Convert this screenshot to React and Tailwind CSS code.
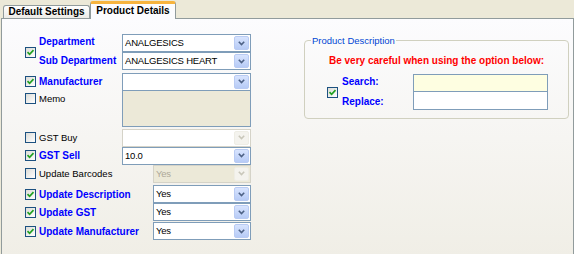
import React from 'react'

// XP-style checkbox, 11px
function Check({ checked = false, className = '' }) {
  return (
    <div className={`flex h-[11px] w-[11px] shrink-0 items-center justify-center border border-[#1C5180] bg-gradient-to-br from-[#DCDCD7] to-white ${className}`}>
      {checked && (
        <svg width="9" height="9" viewBox="0 0 9 9">
          <path d="M1.5 4.2 L3.6 6.3 L7.5 2.2" fill="none" stroke="#21A121" strokeWidth="1.7" />
        </svg>
      )}
    </div>
  )
}

function DropButton({ disabled }) {
  return (
    <div className={`m-[1px] flex w-[15px] shrink-0 items-center justify-center rounded-[2px] border ${disabled ? 'border-[#EEEDE5] bg-[#F4F3EE]' : 'border-[#B9CBF3] bg-gradient-to-b from-[#D8E4FE] to-[#B7CBF6]'}`}>
      <svg width="7" height="5" viewBox="0 0 7 5">
        <path d="M0.8 0.8 L3.5 3.5 L6.2 0.8" fill="none" stroke={disabled ? '#C9C7BA' : '#4D6185'} strokeWidth="1.6" />
      </svg>
    </div>
  )
}

function Combo({ value = '', disabled = false, shaded = false, className = '' }) {
  return (
    <div className={`flex h-[18px] shrink-0 items-stretch border ${disabled ? 'border-[#D5D3C8]' : 'border-[#7F9DB9]'} ${shaded ? 'bg-[#ECE9D8]' : 'bg-white'} ${className}`}>
      <span className={`flex-1 truncate pl-[2px] text-[9.5px] leading-[16px] tracking-[-0.2px] ${disabled ? 'text-[#ACA899]' : 'text-black'}`}>{value}</span>
      <DropButton disabled={disabled} />
    </div>
  )
}

function Row({ label, bold, checked, children, short, className = '' }) {
  return (
    <div className={`flex items-center ${className}`}>
      <Check checked={checked} />
      <span className={`ml-[3px] shrink-0 whitespace-nowrap leading-[13px] ${short ? 'w-[114px]' : 'w-[83px]'} ${bold ? 'text-[10px] font-bold text-[#0000FF]' : 'text-[9.5px] text-black'}`}>
        {label}
      </span>
      {children}
    </div>
  )
}

export default function App() {
  return (
    <div className="h-[254px] w-[574px] overflow-hidden bg-[#ECE9D8] font-['Liberation_Sans',Arial,sans-serif] text-[10px] text-black">
      {/* tabs */}
      <div className="flex h-[18px] items-end">
        <div className="ml-[3px] flex h-[13px] w-[87px] items-center justify-center rounded-t-[3px] border border-b-0 border-[#919B9C] bg-gradient-to-b from-white to-[#ECEBE6] font-bold leading-[12px]">
          Default Settings
        </div>
        <div className="relative z-10 -mb-px flex h-[18px] w-[86px] items-center justify-center rounded-t-[3px] border-x border-t-[3px] border-x-[#919B9C] border-t-[#F7B43E] bg-[#FCFCFE] pb-[2px] font-bold leading-[12px]">
          Product Details
        </div>
      </div>

      {/* panel */}
      <div className="ml-[1px] flex h-[240px] w-[573px] border border-[#919B9C] bg-gradient-to-b from-[#FCFCFE] to-[#F0EEE6]">
        {/* left form */}
        <div className="flex w-[249px] shrink-0 flex-col pl-[23px] pt-[16px]">
          <div className="flex h-[34px] items-center">
            <Check checked />
            <div className="ml-[3px] flex w-[83px] shrink-0 flex-col whitespace-nowrap font-bold text-[#0000FF]">
              <span className="h-[17px] leading-[13px]">Department</span>
              <span className="flex h-[17px] items-center leading-[13px]">Sub Department</span>
            </div>
            <div className="flex w-[129px] shrink-0 flex-col">
              <Combo value="ANALGESICS" className="h-[17px]" />
              <Combo value="ANALGESICS HEART" className="h-[17px]" />
            </div>
          </div>

          <Row label="Manufacturer" bold checked className="mt-[4px] h-[17px]">
            <Combo className="h-[17px] w-[129px]" />
          </Row>

          <div className="flex h-[37px] items-start">
            <Check className="mt-[3px]" />
            <span className="ml-[3px] mt-[2px] w-[83px] shrink-0 text-[9.5px] leading-[13px]">Memo</span>
            <div className="h-[37px] w-[129px] shrink-0 border border-[#7F9DB9] bg-[#ECE9D8]" />
          </div>

          <Row label="GST Buy" className="mt-[2px] h-[17px]">
            <Combo disabled className="h-[17px] w-[129px]" />
          </Row>
          <Row label="GST Sell" bold checked className="mt-[1px] h-[17px]">
            <Combo value="10.0" className="h-[17px] w-[129px]" />
          </Row>
          <Row label="Update Barcodes" short className="mt-[1px] h-[17px]">
            <Combo value="Yes" disabled shaded className="h-[17px] w-[98px]" />
          </Row>
          <Row label="Update Description" bold checked short className="mt-[3px] h-[18px]">
            <Combo value="Yes" className="w-[98px]" />
          </Row>
          <Row label="Update GST" bold checked short className="h-[18px]">
            <Combo value="Yes" className="w-[98px]" />
          </Row>
          <Row label="Update Manufacturer" bold checked short className="mt-[1px] h-[18px]">
            <Combo value="Yes" className="w-[98px]" />
          </Row>
        </div>

        {/* product description group */}
        <div className="relative ml-[53px] mt-[21px] flex h-[79px] w-[265px] shrink-0 flex-col rounded-[4px] border border-[#D0D0BF] pt-[13px]">
          <span className="absolute left-[6px] top-[-7px] bg-[#FBFBFA] px-[1px] text-[9.5px] leading-[13px] text-[#0046D5]">Product Description</span>
          <p className="text-center font-bold leading-[13px] text-[#FF0000]">Be very careful when using the option below:</p>
          <div className="mt-[7px] flex items-center pl-[22px]">
            <Check checked />
            <div className="ml-[4px] flex w-[71px] shrink-0 flex-col font-bold text-[#0000FF]">
              <span className="flex h-[18px] items-center pb-[3px] leading-[13px]">Search:</span>
              <span className="flex h-[18px] items-center leading-[13px]">Replace:</span>
            </div>
            <div className="flex w-[135px] flex-col">
              <div className="h-[18px] border border-[#7F9DB9] bg-[#FEFEE1]" />
              <div className="h-[18px] border border-t-0 border-[#7F9DB9] bg-white" />
            </div>
          </div>
        </div>
      </div>
    </div>
  )
}
